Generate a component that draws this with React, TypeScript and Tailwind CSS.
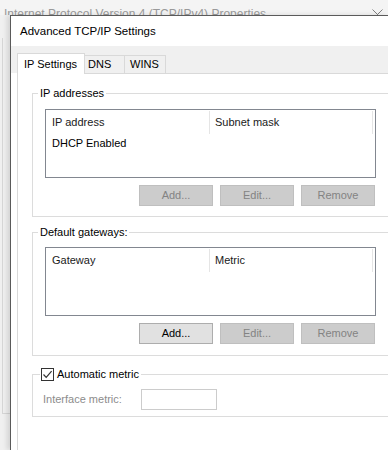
import React from 'react';

// Win10 style button, grey when disabled
function Btn({ label, disabled }: { label: string; disabled?: boolean }) {
  return (
    <button
      type="button"
      className={`w-[74px] h-[21px] border text-[11px] leading-none ${
        disabled
          ? 'bg-[#cccccc] border-[#bfbfbf] text-[#838383]'
          : 'bg-[#e1e1e1] border-[#adadad] text-black'
      }`}
    >
      {label}
    </button>
  );
}

// list view with two column headers
function ListBox({ cols, rows }: { cols: string[]; rows: string[] }) {
  return (
    <div className="w-[331px] h-[69px] border border-[#828790] bg-white text-[11px]">
      <div className="flex h-[23px] mt-px text-[#1a1a1a]">
        <div className="w-[164px] border-r border-[#e5e5e5] pl-[6px] flex items-center">{cols[0]}</div>
        <div className="w-[163px] border-r border-[#e5e5e5] pl-[5px] flex items-center">{cols[1]}</div>
      </div>
      {rows.map((r) => (
        <div key={r} className="h-[18px] pl-[6px] flex items-center text-black">
          {r}
        </div>
      ))}
    </div>
  );
}

function Buttons({ addEnabled }: { addEnabled?: boolean }) {
  return (
    <div className="w-[331px] flex justify-end gap-[7px] pr-px mt-[7px]">
      <Btn label="Add..." disabled={!addEnabled} />
      <Btn label="Edit..." disabled />
      <Btn label="Remove" disabled />
    </div>
  );
}

export default function App() {
  return (
    <div className="w-[388px] h-[450px] overflow-hidden bg-[#f0f0f0] flex flex-col font-['Liberation_Sans',Arial,sans-serif] text-[11px] text-black">
      {/* window behind: title bar, mostly covered */}
      <div className="h-[15px] shrink-0 overflow-hidden flex justify-between bg-[#f4f4f4]">
        <p className="pl-[4px] pt-[7px] text-[12px] leading-[14px] text-[#9a9a9a] whitespace-nowrap">
          Internet Protocol Version 4 (TCP/IPv4) Properties
        </p>
        <svg width="11" height="11" viewBox="0 0 11 11" className="mt-[9px] mr-[5px] shrink-0">
          <path d="M0.5 0.5 L10.5 10.5 M10.5 0.5 L0.5 10.5" stroke="#808080" strokeWidth="1" />
        </svg>
      </div>

      <div className="flex flex-1 min-h-0">
        {/* left strip of the window behind */}
        <div className="w-[10px] shrink-0">
          <div className="mt-[23px] ml-[2px] h-[376px] border-l border-b border-[#d6d6d6]" />
        </div>

        {/* front dialog */}
        <div className="flex-1 min-w-0 flex flex-col bg-white border-l border-t border-[#5a5a5a] shadow-[-3px_0_5px_rgba(0,0,0,0.12)]">
          <div className="h-[30px] shrink-0 flex items-center pl-[9px] pt-[2px] text-[11.5px]">
            Advanced TCP/IP Settings
          </div>

          {/* tab strip */}
          <div className="h-[27px] shrink-0 flex items-end pl-[6px] bg-[#f0f0f0]">
            <div className="relative z-10 -mb-px w-[68px] h-[21px] flex items-center pl-[6px] bg-white border-x border-t border-[#d9d9d9]">
              IP Settings
            </div>
            <div className="w-[40px] h-[18px] flex items-center pl-[3px] border-t border-r border-[#d9d9d9]">
              DNS
            </div>
            <div className="w-[41px] h-[18px] flex items-center pl-[5px] border-t border-r border-[#d9d9d9]">
              WINS
            </div>
          </div>

          {/* tab page */}
          <div className="flex-1 ml-[6px] border-t border-l border-[#d9d9d9] pl-[14px] flex flex-col">
            <fieldset className="w-[370px] mt-[12px] border border-[#dcdcdc]">
              <legend className="ml-[5px] px-[2px] leading-[14px]">IP addresses</legend>
              <div className="ml-[12px] pt-[9px] pb-[10px]">
                <ListBox cols={['IP address', 'Subnet mask']} rows={['DHCP Enabled']} />
                <Buttons />
              </div>
            </fieldset>

            <fieldset className="w-[370px] mt-[8px] border border-[#dcdcdc]">
              <legend className="ml-[5px] px-[2px] leading-[14px]">Default gateways:</legend>
              <div className="ml-[12px] pt-[8px] pb-[11px]">
                <ListBox cols={['Gateway', 'Metric']} rows={[]} />
                <Buttons addEnabled />
              </div>
            </fieldset>

            <fieldset className="w-[370px] mt-[11px] border border-[#dcdcdc]">
              <legend className="ml-[7px] pl-px pr-[2px] leading-[14px]">
                <span className="flex items-center h-[14px]">
                  <span className="w-[13px] h-[13px] border border-[#333333] bg-white flex items-center justify-center">
                    <svg width="11" height="11" viewBox="0 0 11 11">
                      <path d="M1.5 5.5 L4.2 8.3 L9.6 2.2" fill="none" stroke="#333333" strokeWidth="1.2" />
                    </svg>
                  </span>
                  <span className="ml-[3px]">Automatic metric</span>
                </span>
              </legend>
              <div className="ml-[10px] pt-[8px] pb-[6px] flex items-center">
                <span className="w-[98px] text-[#8c8c8c]">Interface metric:</span>
                <div className="w-[76px] h-[21px] border border-[#cccccc] bg-white" />
              </div>
            </fieldset>
          </div>
        </div>
      </div>
    </div>
  );
}
